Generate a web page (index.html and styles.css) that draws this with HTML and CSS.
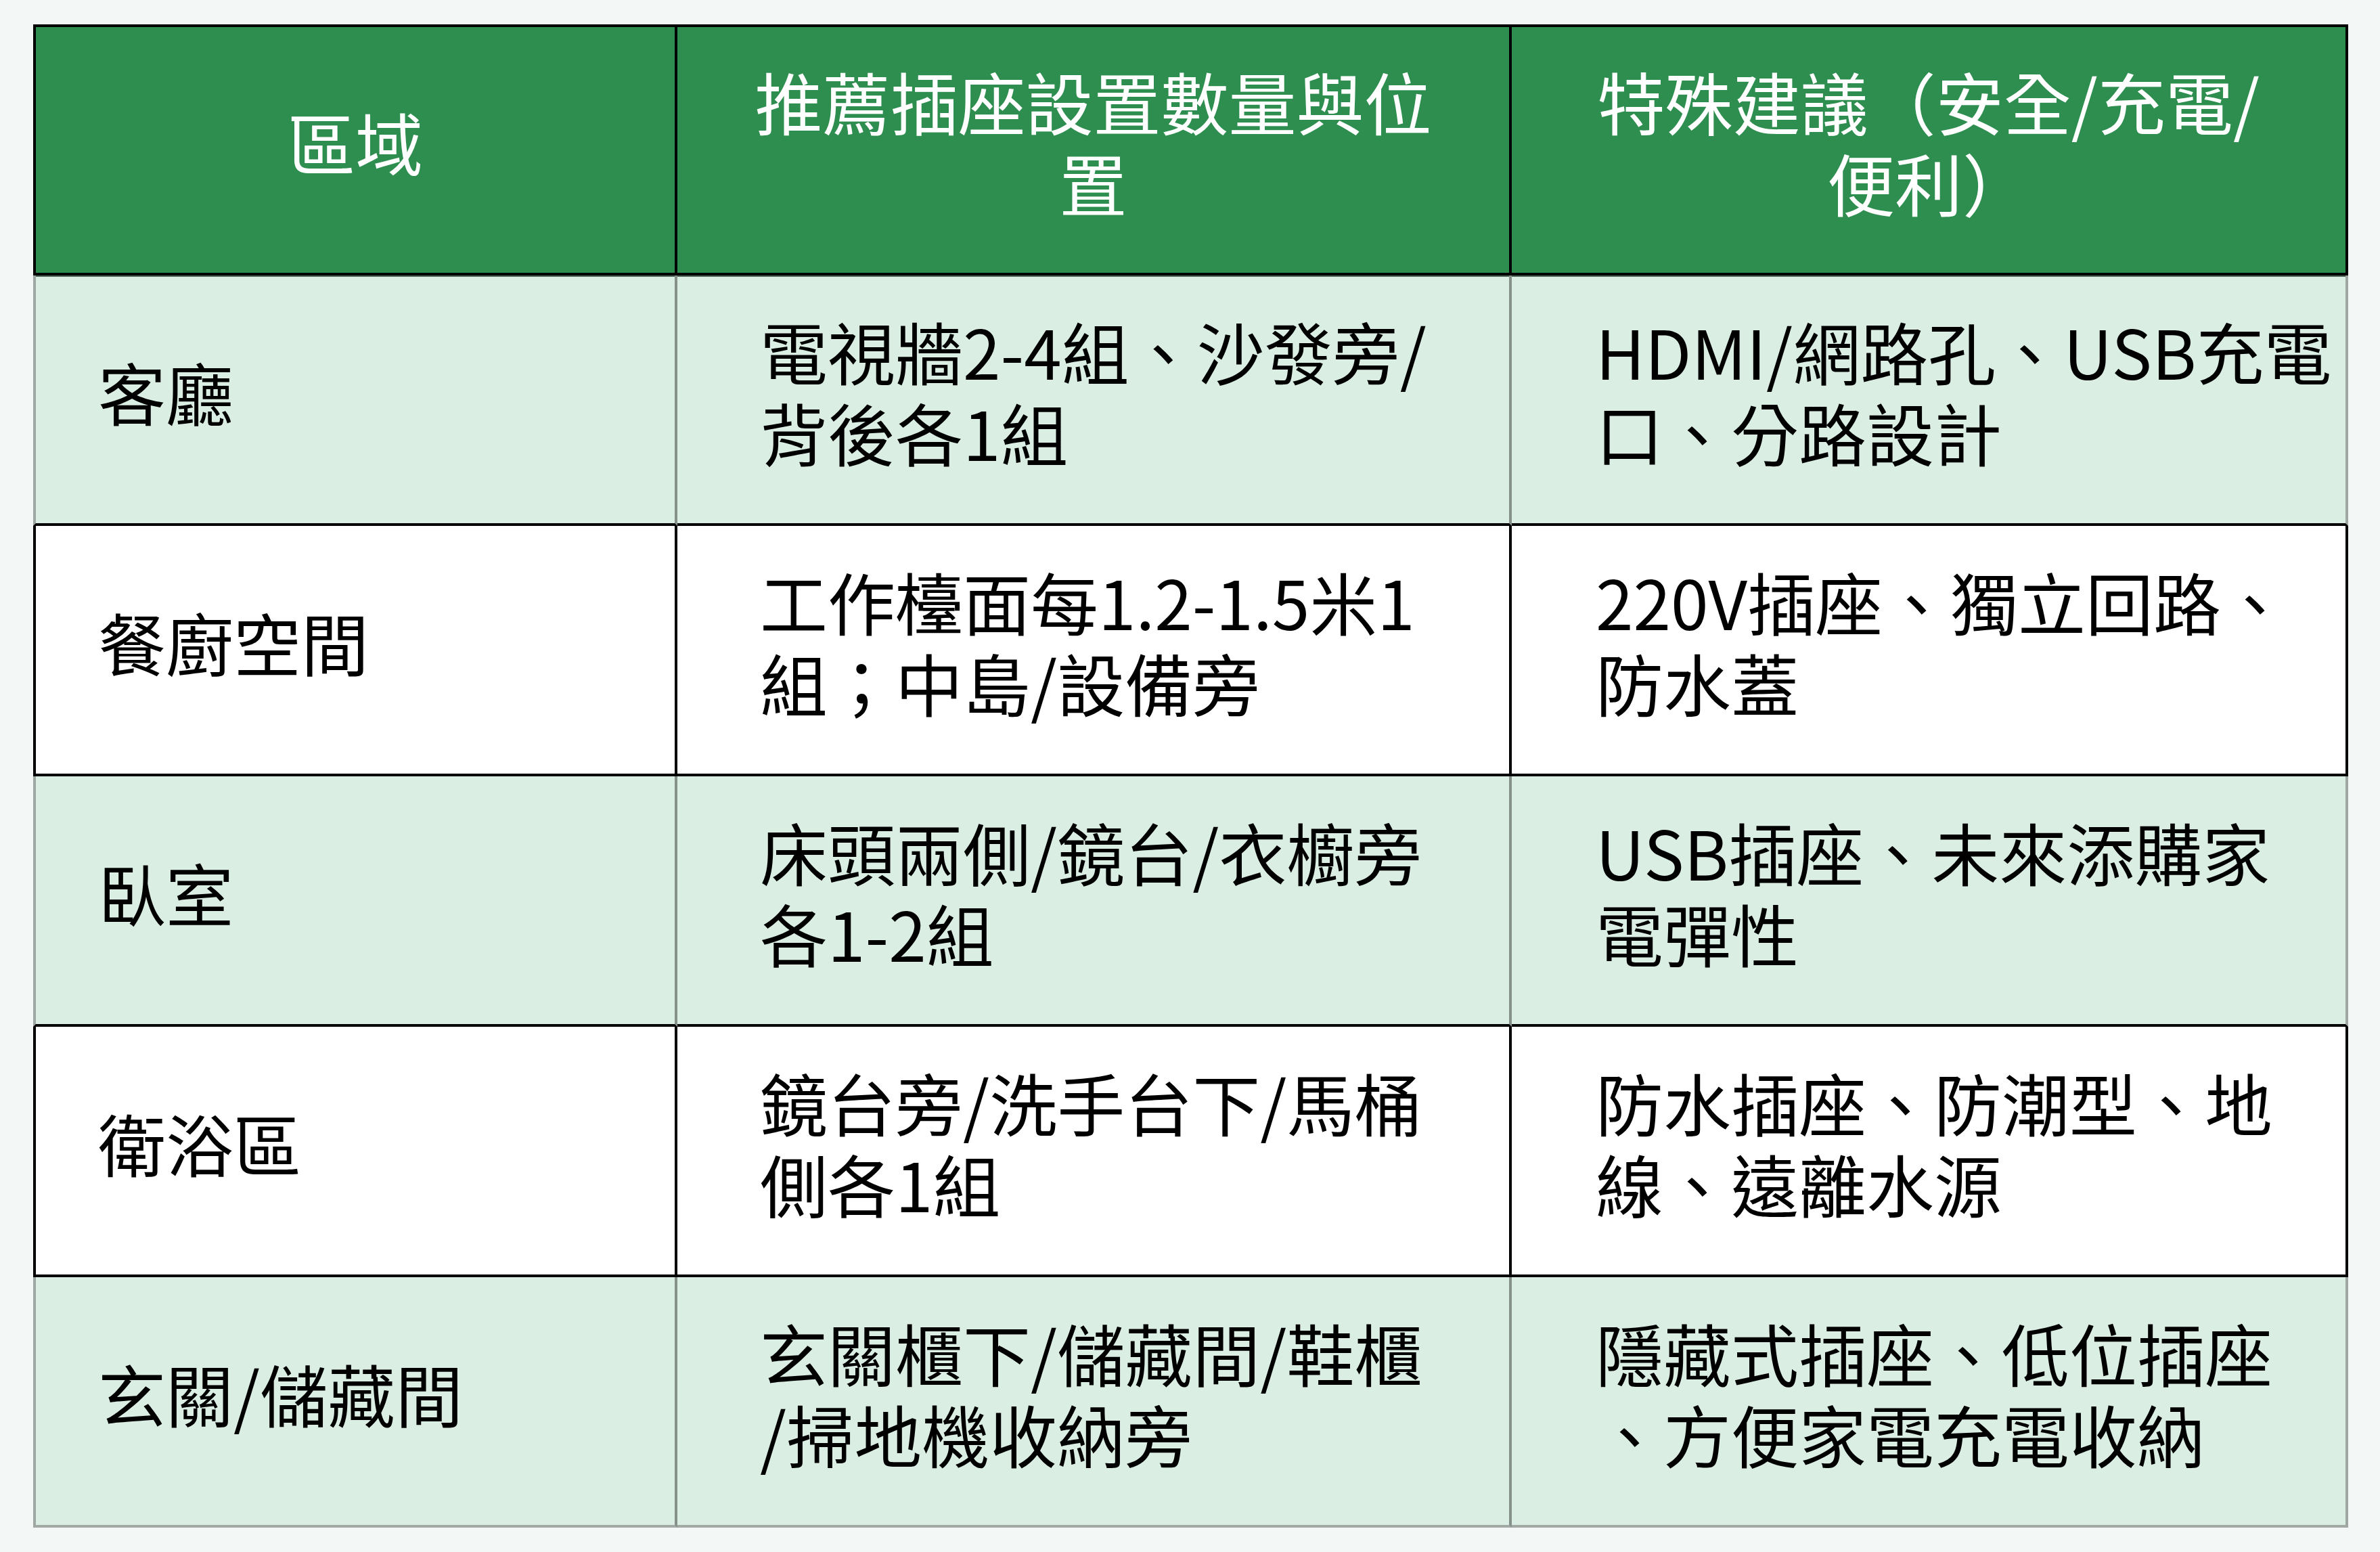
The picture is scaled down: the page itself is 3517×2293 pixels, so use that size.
FILE: index.html
```html
<!DOCTYPE html>
<html lang="zh-Hant">
<head>
<meta charset="utf-8">
<title>插座設置建議</title>
<link rel="stylesheet" href="styles.css">
</head>
<body>
<div class="table">
  <div class="cell head first">區域</div>
  <div class="cell head">推薦插座設置數量與位<br>置</div>
  <div class="cell head">特殊建議（安全/充電/<br>便利）</div>

  <div class="cell tint top first c1">客廳</div>
  <div class="cell tint top c2">電視牆2-4組、沙發旁/<br>背後各1組</div>
  <div class="cell tint top c3">HDMI/網路孔、USB充電<br>口、分路設計</div>

  <div class="cell plain first c1">餐廚空間</div>
  <div class="cell plain c2">工作檯面每1.2-1.5米1<br>組；中島/設備旁</div>
  <div class="cell plain c3">220V插座、獨立回路、<br>防水蓋</div>

  <div class="cell tint first c1">臥室</div>
  <div class="cell tint c2">床頭兩側/鏡台/衣櫥旁<br>各1-2組</div>
  <div class="cell tint c3">USB插座、未來添購家<br>電彈性</div>

  <div class="cell plain first c1">衛浴區</div>
  <div class="cell plain c2">鏡台旁/洗手台下/馬桶<br>側各1組</div>
  <div class="cell plain c3">防水插座、防潮型、地<br>線、遠離水源</div>

  <div class="cell tint last first c1">玄關/儲藏間</div>
  <div class="cell tint last c2">玄關櫃下/儲藏間/鞋櫃<br>/掃地機收納旁</div>
  <div class="cell tint last c3">隱藏式插座、低位插座<br>、方便家電充電收納</div>
</div>
</body>
</html>
```
FILE: styles.css
```css
html, body {
  margin: 0;
  padding: 0;
}

body {
  background: #f3f7f5;
  padding: 36px 47px 36px 49px;
  font-family: "Noto Sans CJK TC", "Noto Sans CJK SC", "Noto Sans", sans-serif;
  color: #000;
}

.table {
  display: grid;
  grid-template-columns: 952px 1233px 1236px;
  grid-template-rows: 371px repeat(5, 370px);
  width: 3421px;
}

.cell {
  box-sizing: border-box;
  display: flex;
  align-items: center;
  font-size: 100px;
  line-height: 120px;
  white-space: nowrap;
  padding-bottom: 24px;
  border-right: 4px solid #000;
  border-bottom: 4px solid #000;
}

.cell.first {
  border-left: 4px solid #000;
}

.head {
  background: #2e8e4f;
  color: #fff;
  border-top: 4px solid #000;
  justify-content: center;
  text-align: center;
  padding-bottom: 26px;
}

.tint {
  background: #dbeee3;
  border-right-color: #86918b;
}

.tint.first {
  border-left-color: #9ea7a2;
}

.tint.c3 {
  border-right-color: #9ea7a2;
}

.tint.top {
  box-shadow: inset 0 2px 0 #4d6657;
}

.tint.last {
  border-bottom-color: #a2aaa6;
}

.plain {
  background: #fff;
}

.c1 {
  padding-left: 92px;
}

.c2 {
  padding-left: 122px;
}

.c3 {
  padding-left: 124px;
}
```
